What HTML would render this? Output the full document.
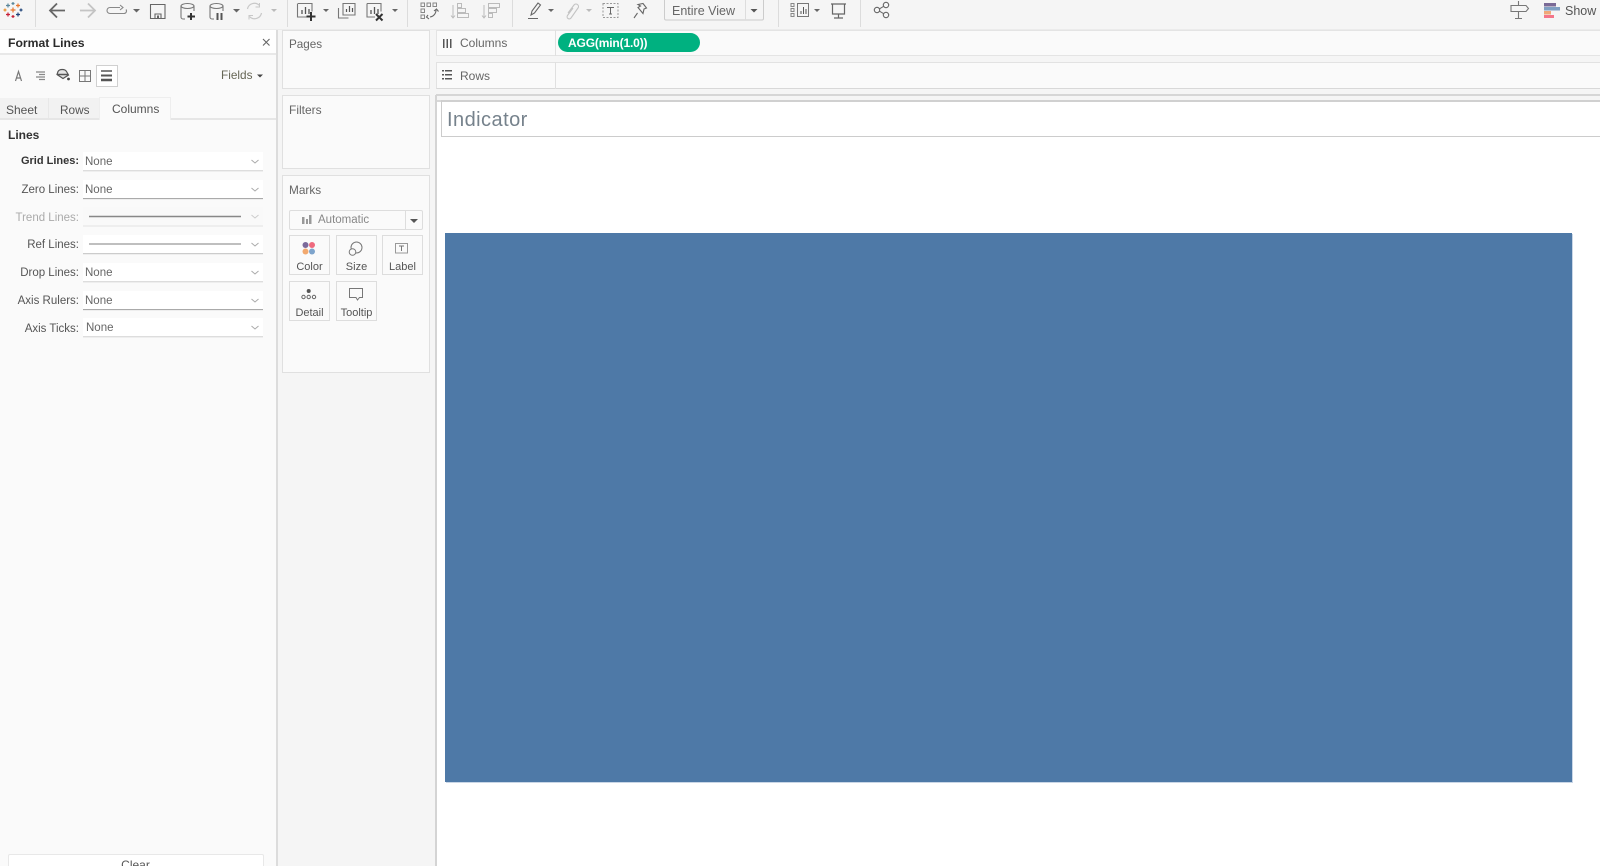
<!DOCTYPE html>
<html><head><meta charset="utf-8">
<style>
html,body{margin:0;padding:0;width:1600px;height:866px;overflow:hidden;background:#f5f5f5;font-family:"Liberation Sans",sans-serif;color:#555;font-size:12px}
.a{position:absolute;box-sizing:border-box}
.t{position:absolute;white-space:nowrap;line-height:16px;font-size:12px}
.lab{position:absolute;right:1521px;text-align:right;white-space:nowrap;line-height:16px;font-size:11.5px;color:#555}
.dd{position:absolute;left:83px;width:180px;height:19px;background:#fff;border-bottom:1px solid #ddd;box-shadow:0 1px 0 #eee;padding-left:2px;line-height:20px;font-size:11.5px;color:#666;box-sizing:border-box}
.card{position:absolute;width:41px;height:40px;background:#fafafa;border:1px solid #ddd;box-sizing:border-box;text-align:center;font-size:11px;line-height:14px;color:#555;padding-top:24px}
</style></head><body>
<div class="a" style="left:0;top:0;width:1600px;height:866px;overflow:hidden">

<!-- toolbar -->
<div class="a" style="left:0;top:29px;width:1600px;height:1px;background:#ebebeb"></div>
<svg class="a" style="left:0;top:0" width="1600" height="30" fill="none" stroke-linecap="butt">
<g stroke="#dcdcdc"><path d="M35.500 0V27M287.500 0V27M407.500 0V27M512.500 0V27M778.500 0V27M860.500 0V27"/></g>
<!-- logo -->
<g stroke-width="1.200"><path d="M13 7.500v5M10.500 10h5" stroke="#e8762d"/><path d="M8 3.500v4M6 5.500h4" stroke="#5b879b"/><path d="M18 3.500v4M16 5.500h4" stroke="#e8762d"/><path d="M8 12.500v4M6 14.500h4" stroke="#c72037"/><path d="M18 12.500v4M16 14.500h4" stroke="#1f447a"/><path d="M13 2v3M11.500 3.500h3" stroke="#59879b"/><path d="M13 15v3M11.500 16.500h3" stroke="#c72037"/><path d="M5 8.500v3M3.500 10h3" stroke="#eb912b"/><path d="M21 8.500v3M19.500 10h3" stroke="#1f447a"/></g>
<!-- back / forward -->
<path d="M65 10.500H50M57 3.500l-7 7 7 7" stroke="#666" stroke-width="1.800"/>
<path d="M80 10.500H95M88 3.500l7 7-7 7" stroke="#c4c4c4" stroke-width="1.800"/>
<path d="M120 7.500h-10a3 3 0 0 0 0 6h14a2.500 2.500 0 0 0 2-4M120 5l3 2.500-3 2.500" stroke="#888" stroke-width="1.100"/>
<path d="M133 9h7l-3.500 3.500z" fill="#666"/>
<!-- save -->
<path d="M150.500 4.500h14.500v14h-14.500zM155 18.500v-4.500h6v4.500" stroke="#666" stroke-width="1.100"/><path d="M157 15.500h2v3h-2z" fill="#666"/>
<!-- datasources -->
<path d="M181 6v11a2 2 0 0 0 2 2h2M194 6v5" stroke="#777" stroke-width="1.100"/><ellipse cx="187.500" cy="6" rx="6.500" ry="2.500" stroke="#777" stroke-width="1.100"/><path d="M191 13v7M187.500 16.500h7.500" stroke="#333" stroke-width="2"/>
<path d="M210 6v11a2 2 0 0 0 2 2h2M223 6v5" stroke="#777" stroke-width="1.100"/><ellipse cx="216.500" cy="6" rx="6.500" ry="2.500" stroke="#777" stroke-width="1.100"/><path d="M217.500 13v7M221.500 13v7" stroke="#555" stroke-width="2"/>
<path d="M233 9h7l-3.500 3.500z" fill="#666"/>
<path d="M247.500 9a7 7 0 0 1 12-3.500M261.500 13a7 7 0 0 1-12 3.500" stroke="#c8c8c8" stroke-width="1.200"/><path d="M259.500 3v4h-4M249 19.500v-4h4" stroke="#c8c8c8"/>
<path d="M271 9h6l-3 3z" fill="#bbb"/>
<!-- new worksheet etc -->
<path d="M297.500 3.500v13.500h9M298 3.500h14v8" stroke="#777" stroke-width="1.100"/><path d="M302 14v-4M305.500 14v-7M309 14v-5" stroke="#555" stroke-width="1.300"/><path d="M311 12v9M306.500 16.500h9" stroke="#333" stroke-width="2"/>
<path d="M323 9h6l-3 3z" fill="#666"/>
<path d="M343 3.500h12v11.500h-12zM338.500 8v10h10" stroke="#777" stroke-width="1.100"/><path d="M346.500 12v-3M349.500 12v-6M352.500 12v-4" stroke="#555" stroke-width="1.200"/>
<path d="M367 3.500h14v8M367 3.500v13.500h8" stroke="#777" stroke-width="1.100"/><path d="M371 14v-4M374.500 14v-7M378 14v-5" stroke="#555" stroke-width="1.300"/><path d="M376 14l6.500 6.500M382.500 14l-6.500 6.500" stroke="#333" stroke-width="2"/>
<path d="M392 9h6l-3 3z" fill="#666"/>
<!-- swap -->
<path d="M421 3h3.500v3.500h-3.500zM427 3h3.500v3.500h-3.500zM433 3h3.500v3.500h-3.500zM421 9h3.500v3.500h-3.500zM421 15h3.500v3.500h-3.500z" stroke="#888"/><path d="M436 10a7 7 0 0 1-6 7M428 15l-1.500 2 2.500 2M434 11l2.500-2 2 2.500" stroke="#666" stroke-width="1.100"/>
<!-- sort -->
<path d="M453 5v13M451 15.500l2 2.500 2-2.500" stroke="#bbb"/><path d="M457.500 3.500h4v4h-4zM457.500 8.500h8v4h-8zM457.500 13.500h11v4h-11z" stroke="#bbb"/>
<path d="M484 5v13M482 15.500l2 2.500 2-2.500" stroke="#bbb"/><path d="M488.500 3.500h11v4h-11zM488.500 8.500h8v4h-8zM488.500 13.500h4v4h-4z" stroke="#bbb"/>
<!-- highlight -->
<path d="M531 15l1-4 6-8 2.500 2-6 8zM528 18.500h10" stroke="#666" stroke-width="1.100"/>
<path d="M548 9h6l-3 3z" fill="#666"/>
<!-- clip -->
<path d="M568 13l6-8a2.500 2.500 0 0 1 4 3l-7 10a2 2 0 0 1-3.500-2.500l5.500-7.500" stroke="#c4c4c4" stroke-width="1.100"/>
<path d="M586 9h6l-3 3z" fill="#bbb"/>
<!-- T -->
<rect x="603" y="3.500" width="15" height="14" stroke="#999" stroke-dasharray="2 1.500"/><path d="M607 7.500h7M610.500 7.500v6.500M609 14h3" stroke="#666"/>
<!-- pin -->
<path d="M638 4.500l5-1 3.500 4.500-2.500 1-1 4.500-5-6 2.500-1.500zM637.500 13l-3.500 5" stroke="#666" stroke-width="1.100"/>
<!-- show me/view -->
<rect x="664.500" y="-3" width="99" height="23" rx="1.500" fill="#f5f5f5" stroke="#ccc"/>
<path d="M745.500 0V20" stroke="#ddd"/>
<path d="M750.500 9h7l-3.500 3.500z" fill="#555"/>
<path d="M791 3.500h3v3h-3zM791 8.500h3v3h-3zM791 13.500h3v3h-3z" stroke="#888"/><path d="M797.500 3.500h11v13h-11z" stroke="#777"/><path d="M801 14v-3M803.500 14v-7M806 14v-5" stroke="#555"/>
<path d="M814 9h6l-3 3z" fill="#666"/>
<path d="M831 4h15M832.500 4v10h12V4M838.500 14v4M834 18h9" stroke="#666" stroke-width="1.200"/>
<circle cx="877" cy="10" r="2.700" stroke="#666" stroke-width="1.100"/><circle cx="886" cy="5" r="2.700" stroke="#666" stroke-width="1.100"/><circle cx="886" cy="15" r="2.700" stroke="#666" stroke-width="1.100"/><path d="M879.500 8.800l4-2.400M879.500 11.200l4 2.400" stroke="#666"/>
<!-- signpost -->
<path d="M1518.500 1v4M1511 5.500h15l2.500 3-2.500 3h-15zM1518.500 11.500v7M1515 18.500h7" stroke="#777" stroke-width="1.100"/>
<rect x="1544" y="3" width="12" height="3.500" fill="#7a6a96"/><rect x="1544" y="7" width="16" height="3.500" fill="#7f9fc2"/><rect x="1544" y="11" width="7" height="3.500" fill="#f0a878"/><rect x="1544" y="15" width="10" height="3" fill="#f4768a"/>
</svg>
<div class="t" style="left:672px;top:3px;font-size:12.5px;color:#666">Entire View</div>
<div class="t" style="left:1565px;top:3px;font-size:12.5px;color:#555">Show</div>

<!-- left panel -->
<div class="a" style="left:0;top:30px;width:276px;height:836px;background:#fafafa"></div>
<div class="a" style="left:0;top:30px;width:276px;height:25px;background:#fefefe;border-bottom:2px solid #e8e8e8"></div>
<div class="a" style="left:276px;top:30px;width:1.500px;height:836px;background:#dcdcdc"></div>
<div class="t" style="left:8px;top:35px;font-size:12.2px;font-weight:bold;color:#2a2a2a">Format Lines</div>
<svg class="a" style="left:0;top:30px" width="276" height="60" fill="none">
<path d="M263 9l6.500 6.500M269.500 9l-6.500 6.500" stroke="#666" stroke-width="1.100"/>
<path d="M15.500 51l3-9.500 3 9.500M16.500 48h4" stroke="#777" stroke-width="1.200"/>
<path d="M36 42h9M39 44.500h6M36 47h9M39 49.500h6" stroke="#888" stroke-width="1.300"/>
<path d="M58 41.500a4.500 3 0 0 1 8.500 0l2 3.500-5.500 3.500-6-4z" fill="#e4e4e4" stroke="#555" stroke-width="1.200"/><path d="M57 44.500h11" stroke="#555" stroke-width="1.500"/><circle cx="68.500" cy="49" r="1.400" fill="#444"/>
<path d="M79.500 40.500h11v11h-11zM85 40.500v11M79.500 46h11" stroke="#777"/>
<rect x="96.500" y="35.500" width="21" height="21" stroke="#d0d0d0" fill="#fff" stroke-width="1"/>
<path d="M101 41h11" stroke="#555" stroke-width="1.500"/><path d="M101 45.500h11" stroke="#555" stroke-width="2"/><path d="M101 50h11" stroke="#555" stroke-width="2.500"/>
<path d="M257 44.500h6l-3 3z" fill="#444"/>
</svg>
<div class="t" style="left:221px;top:67px;color:#665;font-size:11.8px">Fields</div>
<!-- tabs -->
<div class="a" style="left:0;top:98px;width:49px;height:21px;background:#f2f2f2;border-right:1px solid #e8e8e8;"></div>
<div class="a" style="left:49px;top:98px;width:50px;height:21px;background:#f2f2f2"></div>
<div class="a" style="left:0;top:118px;width:276px;height:2px;background:#e6e6e6"></div>
<div class="a" style="left:99px;top:97px;width:72px;height:23px;background:#fafafa;border-top:1px solid #eee;border-left:1px solid #eee;border-right:1px solid #eee"></div>
<div class="t" style="left:6px;top:102px;color:#555">Sheet</div>
<div class="t" style="left:60px;top:102px;color:#555;font-size:11.8px">Rows</div>
<div class="t" style="left:112px;top:101px;color:#555">Columns</div>
<div class="t" style="left:8px;top:127px;font-weight:bold;color:#333">Lines</div>

<div class="lab" style="top:153px;font-weight:bold;color:#333;font-size:11px">Grid Lines:</div>
<div class="lab" style="top:182px">Zero Lines:</div>
<div class="lab" style="top:210px;color:#aaa">Trend Lines:</div>
<div class="lab" style="top:237px">Ref Lines:</div>
<div class="lab" style="top:265px">Drop Lines:</div>
<div class="lab" style="top:293px">Axis Rulers:</div>
<div class="lab" style="top:321px">Axis Ticks:</div>

<div class="dd" style="top:152px">None</div>
<div class="dd" style="top:180px;border-bottom-color:#aaa">None</div>
<div class="dd" style="top:207px;background:#f9f9f9;border-bottom-color:#eee"></div>
<div class="dd" style="top:235px;border-bottom-color:#ccc"></div>
<div class="dd" style="top:263px">None</div>
<div class="dd" style="top:291px;border-bottom-color:#aaa">None</div>
<div class="dd" style="top:318px;padding-left:3px">None</div>
<svg class="a" style="left:0;top:150px" width="276" height="190" fill="none" stroke="#aaa">
<path d="M251.500 10l3.500 3 3.500-3M251.500 38l3.500 3 3.500-3M251.500 93l3.500 3 3.500-3M251.500 121l3.500 3 3.500-3M251.500 149l3.500 3 3.500-3M251.500 176l3.500 3 3.500-3"/>
<path d="M251.500 65l3.500 3 3.500-3" stroke="#ccc"/>
<path d="M89 66.500h152" stroke="#888" stroke-width="1.500"/>
<path d="M89 94h152" stroke="#aaa" stroke-width="1.500"/>
</svg>
<!-- clear -->
<div class="a" style="left:8px;top:854px;width:256px;height:20px;background:#fff;border:1px solid #e8e8e8;border-radius:2px;text-align:center;line-height:16px;padding-top:2px;font-size:12px;color:#555;padding-right:1px">Clear</div>

<!-- middle cards -->
<div class="a" style="left:282px;top:30px;width:148px;height:59px;background:#fafafa;border:1px solid #e0e0e0"></div>
<div class="t" style="left:289px;top:36.500px;color:#666;font-size:11.7px">Pages</div>
<div class="a" style="left:282px;top:95px;width:148px;height:74px;background:#fafafa;border:1px solid #e0e0e0"></div>
<div class="t" style="left:289px;top:102px;color:#666">Filters</div>
<div class="a" style="left:282px;top:175px;width:148px;height:198px;background:#fafafa;border:1px solid #e0e0e0"></div>
<div class="t" style="left:289px;top:182px;color:#666;font-size:11.8px">Marks</div>
<div class="a" style="left:289px;top:210px;width:134px;height:20px;background:#fafafa;border:1px solid #ddd;border-radius:2px"></div>
<div class="a" style="left:405px;top:210px;width:1px;height:20px;background:#ddd"></div>
<div class="t" style="left:318px;top:212px;font-size:11.500px;color:#888">Automatic</div>
<svg class="a" style="left:282px;top:205px" width="148" height="30"><path d="M20 12h2.500v7H20zM24 14h2v5h-2zM27 10h2.500v9H27z" fill="#999"/><path d="M128 14h8l-4 4z" fill="#555"/></svg>

<div class="card" style="left:289px;top:235px">Color</div>
<div class="card" style="left:336px;top:235px">Size</div>
<div class="card" style="left:382px;top:235px;width:41px">Label</div>
<div class="card" style="left:289px;top:281px">Detail</div>
<div class="card" style="left:336px;top:281px">Tooltip</div>
<svg class="a" style="left:282px;top:238px" width="148" height="90" fill="none">
<circle cx="23.500" cy="7" r="3" fill="#7b6a9b"/><circle cx="30" cy="7" r="3" fill="#ef6a7e"/><circle cx="23.500" cy="13.500" r="3" fill="#f2a96f"/><circle cx="30" cy="13.500" r="3" fill="#7ea4cc"/>
<circle cx="74.500" cy="9.500" r="5.500" stroke="#777"/><circle cx="70.500" cy="14" r="3.300" stroke="#777" fill="#fafafa"/>
<rect x="113.500" y="5.500" width="12" height="9.500" stroke="#999"/><path d="M117 8h5M119.500 8v5" stroke="#777"/>
<circle cx="26.700" cy="53" r="2" fill="#555"/><circle cx="21.500" cy="59" r="1.700" stroke="#666"/><circle cx="26.700" cy="59" r="1.700" stroke="#666"/><circle cx="32" cy="59" r="1.700" stroke="#666"/>
<path d="M67.500 50.500h13v9h-3l-2 2.500-1.500-2.500h-6.500z" stroke="#777"/>
</svg>

<!-- shelves -->
<div class="a" style="left:436px;top:30px;width:1164px;height:26px;background:#fafafa;border:1px solid #e4e4e4;border-right:0"></div>
<div class="a" style="left:555px;top:30px;width:1px;height:26px;background:#e0e0e0"></div>
<div class="a" style="left:436px;top:62px;width:1164px;height:27px;background:#fafafa;border:1px solid #e2e2e2;border-right:0;border-bottom-color:#d8d8d8"></div>
<div class="a" style="left:555px;top:62px;width:1px;height:27px;background:#e0e0e0"></div>
<svg class="a" style="left:436px;top:30px" width="30" height="60"><path d="M7 9h1.500v9H7zM10.500 9H12v9h-1.500zM14 9h1.500v9H14z" fill="#555"/><path d="M6 40h2v1.500H6zM6 44h2v1.500H6zM6 48h2v1.500H6zM9 40h7v1.500H9zM9 44h7v1.500H9zM9 48h7v1.500H9z" fill="#555"/></svg>
<div class="t" style="left:460px;top:35px;color:#666">Columns</div>
<div class="t" style="left:460px;top:67.500px;color:#666">Rows</div>
<div class="a" style="left:558px;top:33px;width:142px;height:19px;background:#00b180;border-radius:10px"></div>
<div class="t" style="left:568px;top:35px;color:#fff;font-size:12px;font-weight:bold;letter-spacing:-.15px">AGG(min(1.0))</div>

<!-- view -->
<div class="a" style="left:436px;top:94px;width:1164px;height:2px;background:#d6d6d6"></div>
<div class="a" style="left:436px;top:100px;width:1164px;height:766px;background:#fff;border-top:2px solid #d8d8d8"></div>
<div class="a" style="left:434.500px;top:95px;width:2px;height:771px;background:#d4d4d4"></div>
<div class="a" style="left:441px;top:100px;width:1159px;height:37px;background:#fff;border:1px solid #ccc;border-top:2px solid #d0d0d0;border-right:0"></div>
<div class="t" style="left:447px;top:108px;font-size:20px;line-height:24px;color:#76828c;letter-spacing:.45px">Indicator</div>
<div class="a" style="left:445px;top:233px;width:1127px;height:549px;background:#4e79a7;box-shadow:1px 1px 0 #c9d6e6"></div>
</div>
</body></html>
